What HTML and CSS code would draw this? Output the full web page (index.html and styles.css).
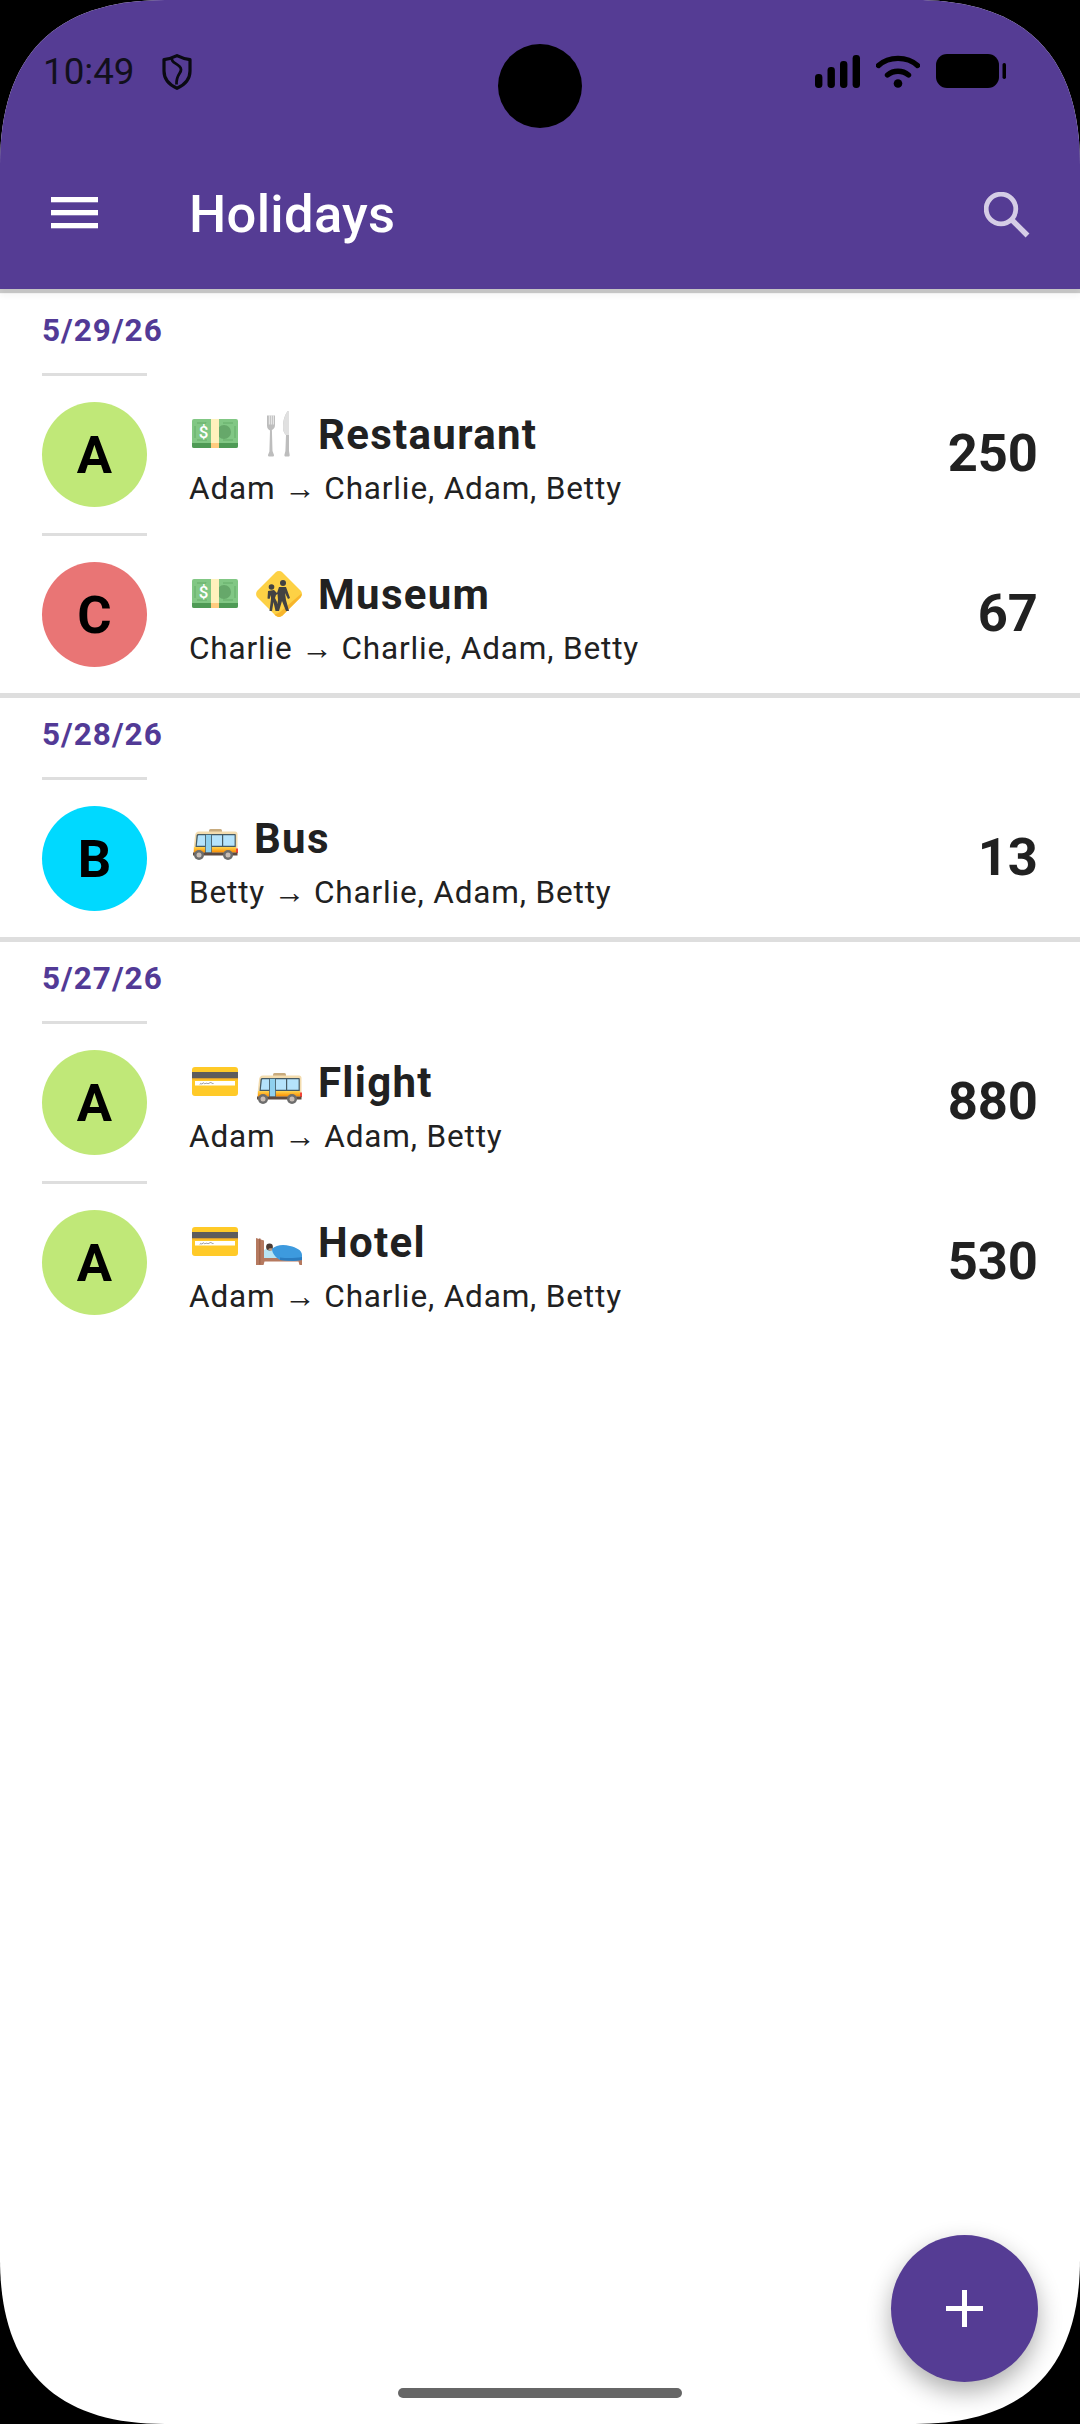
FILE: index.html
```html
<!DOCTYPE html>
<html lang="en">
<head>
<meta charset="utf-8">
<title>Holidays</title>
<link rel="stylesheet" href="styles.css">
</head>
<body>
<svg class="defs" width="0" height="0" aria-hidden="true">
  <defs>
    <linearGradient id="stripe" x1="0" y1="0" x2="0" y2="1"><stop offset="0" stop-color="#ffd54f"/><stop offset="1" stop-color="#fb8c00"/></linearGradient>
    <symbol id="e-money" viewBox="0 0 46 46">
      <rect x="0" y="8" width="46" height="29" rx="2" fill="#81c784"/>
      <path d="M0 32h46v3a2 2 0 0 1-2 2H2a2 2 0 0 1-2-2z" fill="#4e9a55"/>
      <path d="M5 12h9v-0.5M41 12h-10M3 15v12M43 15v12M5 29h10M41 29h-10" fill="none" stroke="#5da763" stroke-width=".8"/>
      <circle cx="32" cy="21" r="7" fill="#66a86a"/>
      <rect x="19" y="8" width="8" height="24" fill="#fff1bd"/>
      <rect x="19" y="32" width="8" height="5" fill="#ffcc80"/>
      <text x="11.5" y="26.5" class="e-dollar">$</text>
    </symbol>
    <symbol id="e-cutlery" viewBox="0 0 46 46">
      <path d="M11 4.500v10c0 3 1.500 4 3 5l-.6 21-1.400 3.500c0 1 .6 1.500 1.500 1.500h3c1 0 1.500-.5 1.500-1.500L16.500 40l-.6-21c1.600-1 3.100-2 3.100-5v-9.500z" fill="#bdbdbd"/>
      <path d="M13.300 4.500v9M15.300 4.500v9M17.300 4.500v9" stroke="#fafafa" stroke-width=".8"/>
      <path d="M33 -1c-3 2-6 9-6 17 0 4 1 6 3 8l-.6 16-1 4c0 1 .6 1.500 1.400 1.500h2.400c1 0 1.500-.5 1.500-1.500l-.7-4z" fill="#bdbdbd"/>
      <path d="M33 -1c-3 2-6 9-6 17 0 4 1 6 3 8h3z" fill="#e0e0e0"/>
    </symbol>
    <symbol id="e-crossing" viewBox="0 0 46 46">
      <path d="M19.500 1.500a5 5 0 0 1 7 0l18 18a5 5 0 0 1 0 7l-18 18a5 5 0 0 1-7 0l-18-18a5 5 0 0 1 0-7z" fill="#fdd145"/>
      <path d="M23.500 41.500l22-19a5 5 0 0 1-1 4l-18 18a5 5 0 0 1-7 0l-1-1z" fill="#f7b52c"/>
      <circle cx="15.500" cy="16" r="2.800" fill="#424242"/>
      <circle cx="27" cy="12" r="3" fill="#424242"/>
      <path d="M12 20l6-1 3 3 2-6h7l4 11-2 1-3-6 1 7 3 11h-3l-4-10-3 10h-3l2-11-.5-6-1.500 1-1 3 2 4 1 9h-2.500l-2-9-1.500 9h-2.500l1.500-12v-4l-1.500 4-2-.5z" fill="#424242"/>
    </symbol>
    <symbol id="e-bus" viewBox="0 0 46 46">
      <path d="M17 17v-1.500a1.500 1.500 0 0 1 1.500-1.500h10a1.500 1.500 0 0 1 1.500 1.500V17z" fill="#c8ab7e"/>
      <path d="M7 16.500h36a2.500 2.500 0 0 1 2.500 2.500v20H1l2-18c.3-3 1.500-4.500 4-4.500z" fill="#f3dcae"/>
      <path d="M6 19h37a.8.8 0 0 1 .8.8V32H3.500l1-11c.1-1.200.6-2 1.500-2z" fill="#455a64"/>
      <path d="M7 20.200h6v10.600H4.800l1-9.200c.1-1 .5-1.400 1.200-1.400zM20 20.200h10v10.600H20zM31.200 20.200h11.400v10.600H31.200z" fill="#b5e3fb"/>
      <rect x="2" y="32" width="42" height="5.500" fill="url(#stripe)"/>
      <rect x="13.500" y="19.500" width="6" height="18.500" fill="#8fd0ee" stroke="#455a64" stroke-width=".7"/>
      <rect x="44" y="33.500" width="2" height="4.500" fill="#f44336"/>
      <rect x="1" y="37.500" width="44.500" height="3" fill="#5d4a40"/>
      <circle cx="7" cy="40" r="5" fill="#6d6d6d"/>
      <circle cx="7" cy="40" r="2.500" fill="#c8bdb5"/>
      <circle cx="36" cy="40" r="5" fill="#6d6d6d"/>
      <circle cx="36" cy="40" r="2.500" fill="#c8bdb5"/>
    </symbol>
    <symbol id="e-card" viewBox="0 0 46 46">
      <rect x="0" y="8" width="46" height="29" rx="3" fill="#ffca28"/>
      <rect x="0" y="13" width="46" height="6.500" fill="#5e5c5c"/>
      <rect x="0" y="19.500" width="46" height="1" fill="#f9a825"/>
      <rect x="3" y="22" width="40" height="4.500" fill="#fff"/>
      <path d="M8 25.500c1-3 1.500 1 2.500-1s1.500 1 3 0 2 1 4-.5 2 1 4 .5" fill="none" stroke="#555" stroke-width=".6"/>
    </symbol>
    <symbol id="e-bed" viewBox="0 0 46 46">
      <path d="M0 19l8 2.500V39h35v-3h3v10h-2.500l-1-3.500H8.500l-1 3.500H0z" fill="#b5795f"/>
      <rect x="3" y="19.500" width="1.500" height="26" fill="#a1664c"/>
      <path d="M8 31c3-2 8-2.500 13-2l2 10H8z" fill="#b8e4f3"/>
      <circle cx="13.500" cy="28" r="3.400" fill="#4a3a33"/>
      <path d="M12 30.500c1-1.500 3-1.500 4.500-1l-1 2.500z" fill="#c49a7c"/>
      <path d="M16 30c4-4 11-5 18-3 6 1.500 12 4 12 9v5c-6 1-14 1-22 0-4-2-8-7-8-11z" fill="#3d9ade"/>
      <path d="M24 41c8 1 16 1 22 0v-3c-6 1-14 1.500-22 .5z" fill="#2a7cc0"/>
    </symbol>
  </defs>
</svg>

<main class="screen">
  <header class="top">
    <div class="status">
      <span class="clock">10:49</span>
      <svg class="shield" width="30" height="36" viewBox="0 0 30 36"><path d="M15 1.600C19 3.600 23.500 5 28 5.600V17c0 7.800-5 13.700-13 17.300C7 30.700 2 24.800 2 17V5.600C6.500 5 11 3.600 15 1.600z" fill="none" stroke="#0a0a12" stroke-width="3.200" stroke-linejoin="round"/><path d="M10 4.500c-1.500 5 8.500 5 9 11 .3 4-5 5-4.500 15" fill="none" stroke="#0a0a12" stroke-width="2.800"/></svg>
      <span class="spacer"></span>
      <svg class="signal" width="46" height="33" viewBox="0 0 46 33"><rect x="0" y="19" width="7.400" height="14" rx="3.400"/><rect x="12.500" y="12" width="7.400" height="21" rx="3.400"/><rect x="25" y="6" width="7.400" height="27" rx="3.400"/><rect x="37.600" y="0" width="7.400" height="33" rx="3.400"/></svg>
      <svg class="wifi" width="44" height="33" viewBox="0 0 44 33"><path d="M2.500 10.500C13 1 31 1 41.500 10.500M11.500 20c6-5 15-5 21 0" fill="none" stroke="#000" stroke-width="5.400" stroke-linecap="round"/><circle cx="22" cy="28.500" r="4.300"/></svg>
      <svg class="battery" width="70" height="34" viewBox="0 0 70 34"><rect x="0" y="0" width="63" height="34" rx="11"/><rect x="66.500" y="9" width="3.500" height="16" rx="1.700"/></svg>
    </div>
    <div class="appbar">
      <svg class="menu" width="47" height="32" viewBox="0 0 47 32"><rect y="0" width="47" height="5.300"/><rect y="13" width="47" height="5.300"/><rect y="26" width="47" height="5.300"/></svg>
      <h1 class="title">Holidays</h1>
      <svg class="search" width="46" height="46" viewBox="0 0 46 46"><circle cx="17" cy="17" r="14.800" fill="none" stroke="#d5cde6" stroke-width="4.800"/><path d="M27.500 27.500 43.500 43.500" stroke="#d5cde6" stroke-width="5.400"/></svg>
    </div>
  </header>

  <section class="list">
    <div class="group">
      <h2 class="date">5/29/26</h2>
      <hr class="rule">
      <article class="row">
        <div class="avatar lime">A</div>
        <div class="body">
          <div class="head"><svg class="emoji"><use href="#e-money"/></svg><svg class="emoji"><use href="#e-cutlery"/></svg><span class="name">Restaurant</span></div>
          <p class="people">Adam <span class="arrow">→</span> Charlie, Adam, Betty</p>
        </div>
        <div class="amount">250</div>
      </article>
      <hr class="rule">
      <article class="row">
        <div class="avatar coral">C</div>
        <div class="body">
          <div class="head"><svg class="emoji"><use href="#e-money"/></svg><svg class="emoji"><use href="#e-crossing"/></svg><span class="name">Museum</span></div>
          <p class="people">Charlie <span class="arrow">→</span> Charlie, Adam, Betty</p>
        </div>
        <div class="amount">67</div>
      </article>
    </div>
    <div class="group">
      <h2 class="date">5/28/26</h2>
      <hr class="rule">
      <article class="row">
        <div class="avatar cyan">B</div>
        <div class="body">
          <div class="head"><svg class="emoji"><use href="#e-bus"/></svg><span class="name">Bus</span></div>
          <p class="people">Betty <span class="arrow">→</span> Charlie, Adam, Betty</p>
        </div>
        <div class="amount">13</div>
      </article>
    </div>
    <div class="group last">
      <h2 class="date">5/27/26</h2>
      <hr class="rule">
      <article class="row">
        <div class="avatar lime">A</div>
        <div class="body">
          <div class="head"><svg class="emoji"><use href="#e-card"/></svg><svg class="emoji"><use href="#e-bus"/></svg><span class="name">Flight</span></div>
          <p class="people">Adam <span class="arrow">→</span> Adam, Betty</p>
        </div>
        <div class="amount">880</div>
      </article>
      <hr class="rule">
      <article class="row">
        <div class="avatar lime">A</div>
        <div class="body">
          <div class="head"><svg class="emoji"><use href="#e-card"/></svg><svg class="emoji"><use href="#e-bed"/></svg><span class="name">Hotel</span></div>
          <p class="people">Adam <span class="arrow">→</span> Charlie, Adam, Betty</p>
        </div>
        <div class="amount">530</div>
      </article>
    </div>
  </section>

  <div class="camera"></div>
  <button class="fab" aria-label="Add"><svg width="37" height="37" viewBox="0 0 37 37"><path d="M16 0h5v16h16v5H21v16h-5V21H0v-5h16z" fill="#fff"/></svg></button>
  <div class="home-bar"></div>
</main>
</body>
</html>
```

FILE: styles.css
```css
* { box-sizing: border-box; }

html, body {
  margin: 0;
  padding: 0;
  background: #000;
}

.defs { position: absolute; }

.e-dollar {
  font: 500 17px "Roboto", sans-serif;
  fill: #fff;
  text-anchor: middle;
}

.screen {
  position: relative;
  width: 1080px;
  height: 2424px;
  background: #fff;
  clip-path: path("M165 0H915C1025 0 1080 55 1080 165V2259C1080 2369 1025 2424 915 2424H165C55 2424 0 2369 0 2259V165C0 55 55 0 165 0Z");
  font-family: "Roboto", sans-serif;
  color: #212121;
}

.top {
  position: relative;
  z-index: 1;
  height: 289px;
  background: #553c94;
  box-shadow: 0 4px 1px rgba(0, 0, 0, 0.2), 0 7px 6px rgba(0, 0, 0, 0.04);
}

.status {
  display: flex;
  align-items: flex-start;
  height: 142px;
  padding: 54px 74px 0 43px;
}

.clock {
  font-size: 36.75px;
  line-height: 36px;
  color: #12101c;
  width: 119px;
}

.spacer { flex: 1; }

.signal { margin-top: 1px; }
.wifi { margin: 1px 0 0 15px; }
.battery { margin-left: 16px; }

.appbar {
  display: flex;
  align-items: center;
  height: 147px;
  padding: 0 50px 0 51px;
  color: #fff;
}

.menu { fill: #fff; margin-top: -6px; }

.title {
  flex: 1;
  margin: -4px 0 0 91px;
  font-size: 52.5px;
  font-weight: 500;
  line-height: 60px;
  letter-spacing: 0.3px;
}

.search { margin-top: -2px; }

.list { padding-top: 5px; }

.group { border-bottom: 5px solid #dedede; }
.group.last { border-bottom: 0; }

.date {
  height: 79px;
  margin: 0;
  padding: 18px 0 0 42px;
  font-size: 31.5px;
  font-weight: 700;
  line-height: 37px;
  letter-spacing: 1px;
  color: #523a96;
}

.rule {
  width: 105px;
  height: 3px;
  margin: 0 0 0 42px;
  border: 0;
  background: #dedede;
}

.row {
  display: flex;
  align-items: center;
  height: 157px;
  padding: 0 42px 0 42px;
}

.avatar {
  flex: none;
  width: 105px;
  height: 105px;
  border-radius: 50%;
  display: flex;
  align-items: center;
  justify-content: center;
  font-size: 52.5px;
  font-weight: 700;
  color: #000;
}

.lime { background: #c0e878; }
.coral { background: #e97575; }
.cyan { background: #00d9ff; }

.body {
  flex: 1;
  align-self: flex-start;
  margin-left: 43px;
  padding-top: 35px;
}

.head {
  display: flex;
  align-items: flex-start;
  height: 46px;
}

.emoji {
  flex: none;
  width: 46px;
  height: 46px;
  margin: 0 16px 0 2px;
  overflow: visible;
}

.name {
  margin-top: 2px;
  font-size: 42px;
  font-weight: 700;
  line-height: 44px;
  letter-spacing: 1.3px;
}

.people {
  margin: 11px 0 0 -1px;
  font-size: 31.5px;
  line-height: 40px;
  letter-spacing: 0.85px;
}

.arrow {
  font-family: "Liberation Sans", sans-serif;
  font-size: 31.5px;
  letter-spacing: 0;
}

.amount {
  margin-top: -3px;
  font-size: 52.5px;
  font-weight: 700;
  line-height: 60px;
}

.camera {
  position: absolute;
  left: 498px;
  top: 44px;
  width: 84px;
  height: 84px;
  border-radius: 50%;
  background: #000;
  z-index: 2;
}

.fab {
  position: absolute;
  left: 891px;
  top: 2235px;
  width: 147px;
  height: 147px;
  padding: 0;
  border: 0;
  border-radius: 50%;
  background: #553c94;
  box-shadow: 0 10px 24px rgba(0, 0, 0, 0.32);
  display: flex;
  align-items: center;
  justify-content: center;
}

.home-bar {
  position: absolute;
  left: 398px;
  top: 2388px;
  width: 284px;
  height: 10px;
  border-radius: 5px;
  background: #666;
}
```
